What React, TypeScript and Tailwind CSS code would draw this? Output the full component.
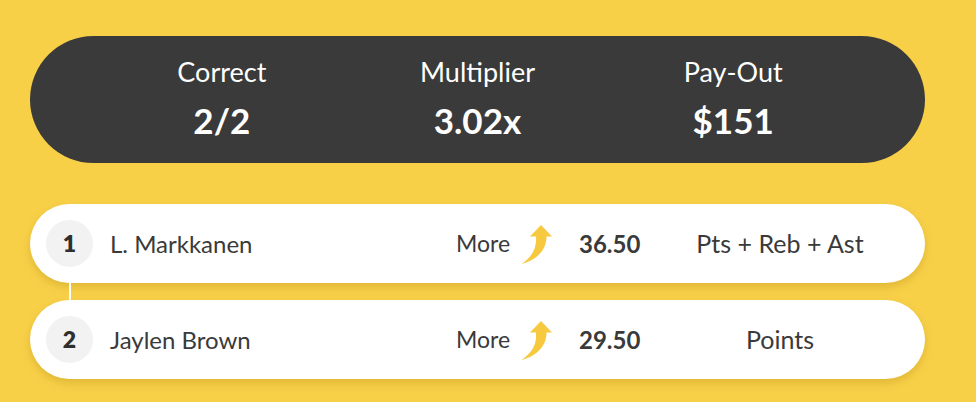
import React from "react";

const Arrow = () => (
  <svg width="32" height="40" viewBox="0 0 32 40" className="block">
    <path
      d="M21 1 L32 12.5 L26.5 12.5 C26.5 26 17 36 1.5 40 C12 33 17 24 16 12.5 L10 12.5 Z"
      fill="#F6C93F"
    />
  </svg>
);

const rows = [
  { n: "1", name: "L. Markkanen", value: "36.50", stat: "Pts + Reb + Ast" },
  { n: "2", name: "Jaylen Brown", value: "29.50", stat: "Points" },
];

export default function App() {
  return (
    <div
      className="w-[976px] h-[402px] bg-[#F8D048] pl-[30px] pt-[36px] overflow-hidden"
      style={{ fontFamily: "Lato, 'Noto Sans', sans-serif" }}
    >
      <div className="w-[895px] h-[127px] rounded-full bg-[#3A3A3A] px-16 grid grid-cols-3 items-center text-white">
        {[
          ["Correct", "2/2"],
          ["Multiplier", "3.02x"],
          ["Pay-Out", "$151"],
        ].map(([l, v]) => (
          <div key={l} className="flex flex-col items-center -mt-[2px]">
            <div className="text-[27px] leading-[32px]">{l}</div>
            <div className="text-[35px] leading-[42px] font-bold mt-[11px]">{v}</div>
          </div>
        ))}
      </div>

      <div className="mt-[41px] w-[895px] flex flex-col">
        {rows.map((r, i) => (
          <div key={r.n} className="flex flex-col">
            {i > 0 && <div className="h-[17px] w-[2px] bg-white ml-[39px]" />}
            <div className="h-[79px] rounded-full bg-white flex items-center shadow-[0_4px_8px_rgba(150,110,0,0.25)] text-[#3A3A3A]">
              <div className="ml-4 w-[47px] h-[47px] rounded-full bg-[#F2F2F2] flex items-center justify-center text-[23px] font-extrabold text-[#2F2F2F]">
                {r.n}
              </div>
              <div className="ml-[17px] w-[346px] text-[24px]">{r.name}</div>
              <div className="w-[64px] text-[23px]">More</div>
              <Arrow />
              <div className="ml-[27px] w-[101px] text-[24px] font-bold">{r.value}</div>
              <div className="w-[200px] text-center text-[25px]">{r.stat}</div>
            </div>
          </div>
        ))}
      </div>
    </div>
  );
}
